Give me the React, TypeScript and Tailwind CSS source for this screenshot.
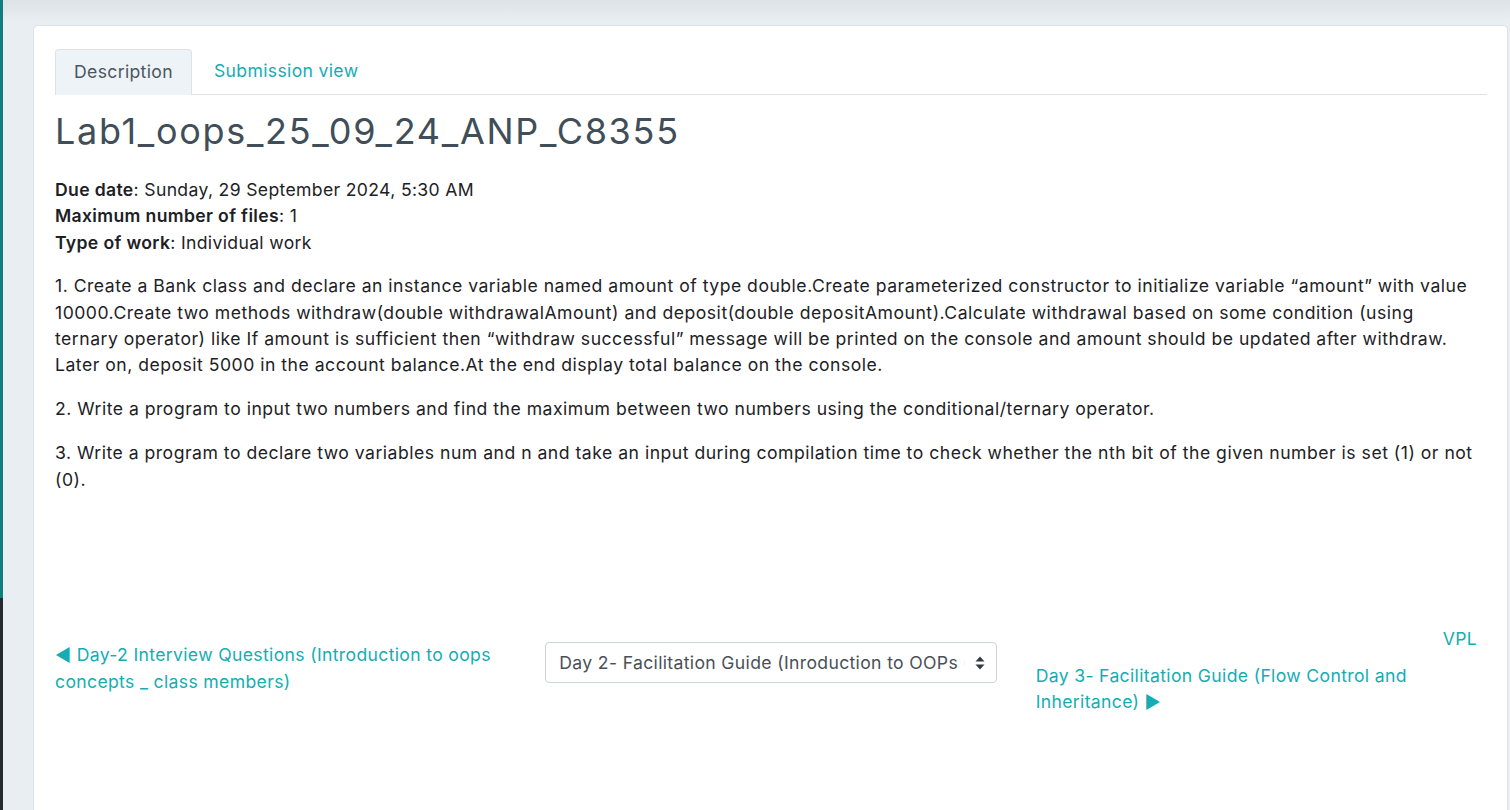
import React from "react";

// ---------------------------------------------------------------------------
// Activity navigation pieces
// ---------------------------------------------------------------------------

function SelectArrows() {
  return (
    <svg width="10" height="14" viewBox="0 0 10 14" className="shrink-0">
      <path d="M5 0.5 L9.5 5.5 H0.5 Z" fill="#343a40" />
      <path d="M5 13.5 L9.5 8.5 H0.5 Z" fill="#343a40" />
    </svg>
  );
}

function JumpSelect() {
  return (
    <div className="ml-[3px] flex h-[41px] w-[452px] items-center rounded-[4px] border border-[#ced4da] bg-white pl-[13px] pr-[11px]">
      <span className="flex-1 overflow-hidden whitespace-nowrap tracking-[0.34px] text-[#495057]">
        Day 2- Facilitation Guide (Inroduction to OOPs (Object oriented programming))
      </span>
      <span className="ml-[10px]">
        <SelectArrows />
      </span>
    </div>
  );
}

// ---------------------------------------------------------------------------
// Page
// ---------------------------------------------------------------------------

export default function App() {
  return (
    <div className="flex h-[810px] w-[1510px] overflow-hidden bg-[#e8eef1] font-['Inter',sans-serif] text-[17.6px] leading-[26.4px] tracking-[0.34px] text-[#1d2125]">
      {/* drawer edge */}
      <div className="flex w-[3px] shrink-0 flex-col">
        <div className="h-[598px] bg-[#0e7f7a]" />
        <div className="flex-1 bg-[#26292d]" />
      </div>

      <div className="flex-1 bg-[linear-gradient(to_bottom,#dce2e6_0px,#e8eef1_22px)] pl-[30px] pr-[2px] pt-[25px]">
        <div className="h-[900px] rounded-t-[5px] border border-[#dde2e6] bg-white pl-[21px] pr-[20px] pt-[23px]">
          {/* tabs */}
          <div className="flex border-b border-[#dee2e6]">
            <div className="-mb-px flex h-[46px] items-center rounded-t-[4px] border border-b-0 border-[#dee2e6] bg-[#eef3f7] px-[18px] text-[#4a5660]">
              Description
            </div>
            <div className="flex h-[45px] items-center px-[22px] text-[#14adb3]">
              Submission view
            </div>
          </div>

          <h2 className="mt-[14px] text-[36px] font-normal leading-[44px] tracking-[1.7px] text-[#3f4e58]">
            Lab1_oops_25_09_24_ANP_C8355
          </h2>

          <div className="mt-[24px]">
            <div>
              <span className="font-semibold">Due date</span>: Sunday, 29 September 2024, 5:30 AM
            </div>
            <div>
              <span className="font-semibold">Maximum number of files</span>: 1
            </div>
            <div>
              <span className="font-semibold">Type of work</span>: Individual work
            </div>
          </div>

          <div className="mt-[17px] max-w-[1418px] space-y-[17.6px] tracking-[0.5px]">
            <p>
              1. Create a Bank class and declare an instance variable named amount of type double.Create
              parameterized constructor to initialize variable “amount” with value 10000.Create two methods
              withdraw(double withdrawalAmount) and deposit(double depositAmount).Calculate withdrawal based on
              some condition (using ternary operator) like If amount is sufficient then “withdraw successful”
              message will be printed on the console and amount should be updated after withdraw. Later on,
              deposit 5000 in the account balance.At the end display total balance on the console.
            </p>
            <p>
              2. Write a program to input two numbers and find the maximum between two numbers using the
              conditional/ternary operator.
            </p>
            <p>
              3. Write a program to declare two variables num and n and take an input during compilation time to
              check whether the nth bit of the given number is set (1) or not (0).
            </p>
          </div>

          {/* activity navigation */}
          <div className="mt-[133px] grid grid-cols-3 gap-[30px]">
            <div className="pt-[16px]">
              <a className="text-[#14adb3]">◄ Day-2 Interview Questions (Introduction to oops concepts _ class members)</a>
            </div>
            <div className="pt-[16px]">
              <JumpSelect />
            </div>
            <div className="flex flex-col">
              <div className="mr-[10px] text-right text-[#14adb3]">VPL</div>
              <a className="mt-[10px] pl-[6px] text-[#14adb3]">
                Day 3- Facilitation Guide (Flow Control and Inheritance) ►
              </a>
            </div>
          </div>
        </div>
      </div>
    </div>
  );
}
